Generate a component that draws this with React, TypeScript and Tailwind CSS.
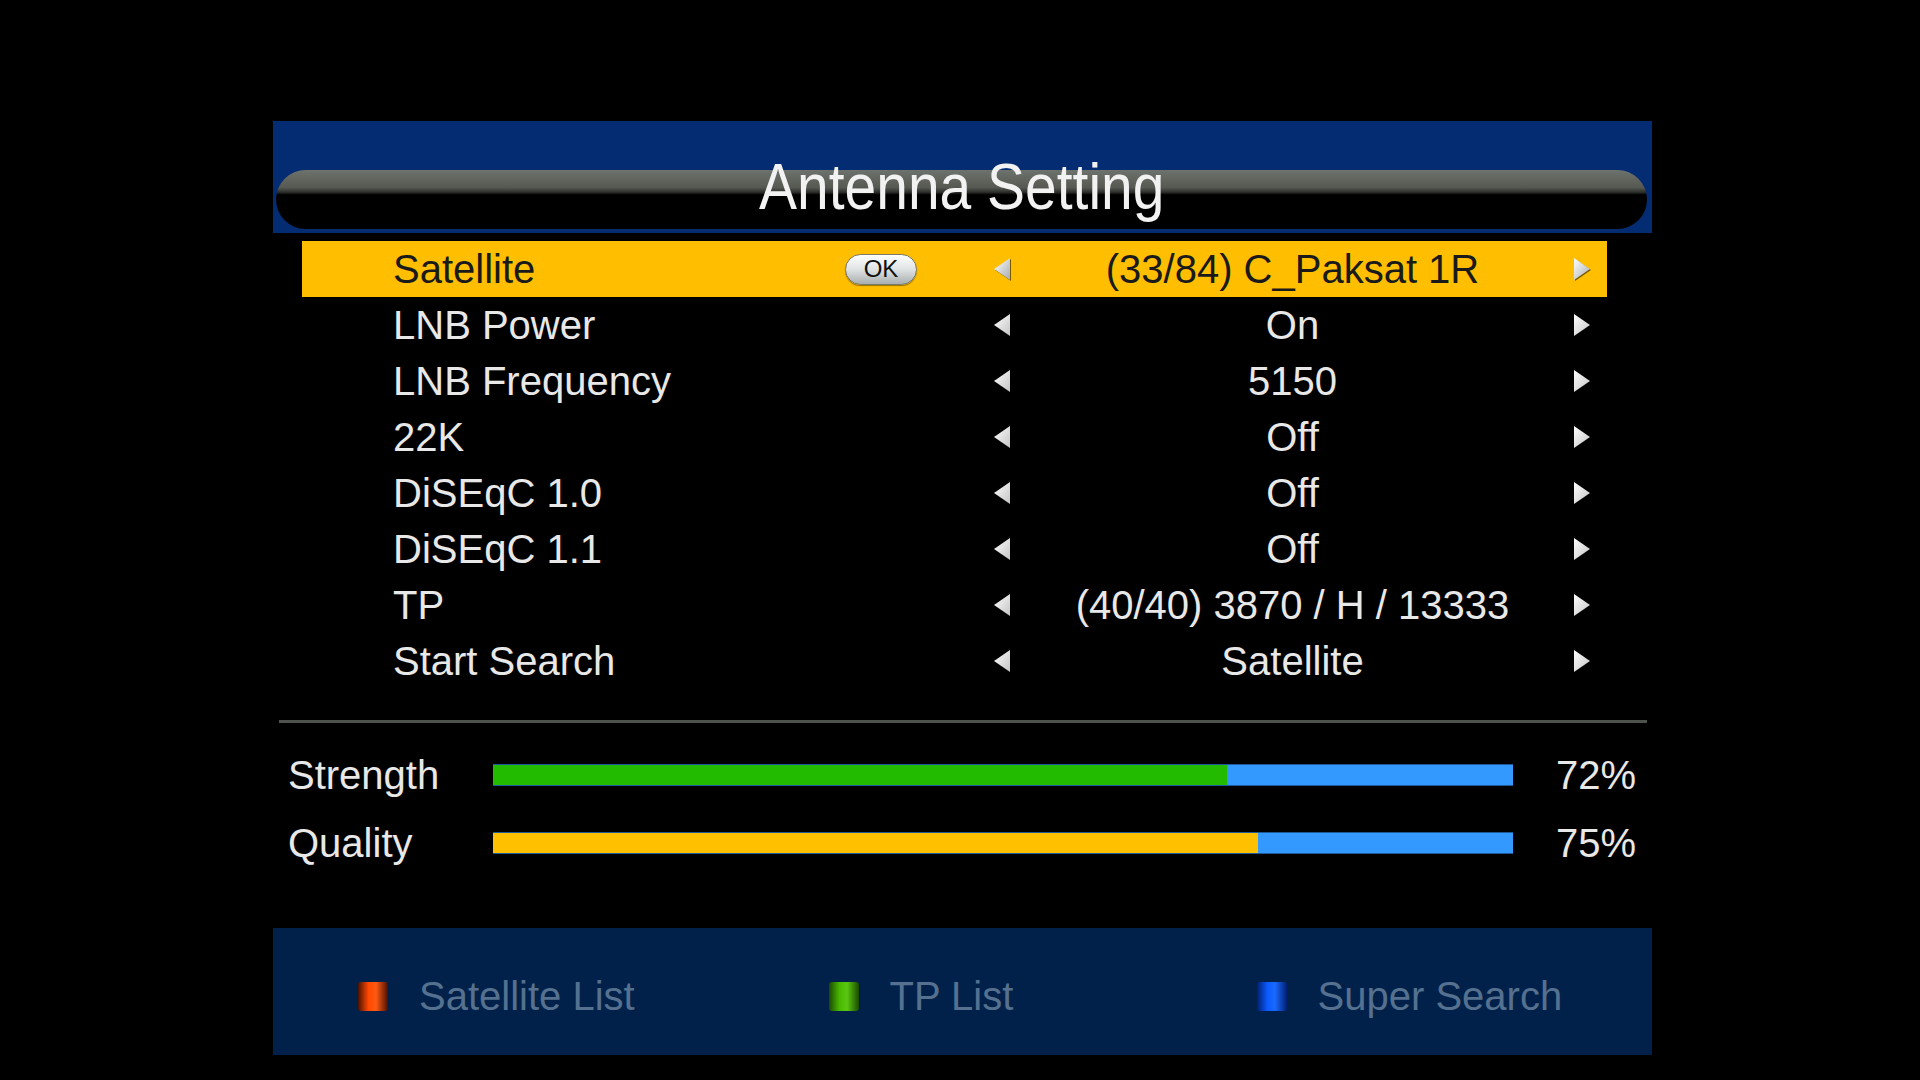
import React from 'react';

type Row = { label: string; value: string };

const rows: Row[] = [
  { label: 'Satellite', value: '(33/84) C_Paksat 1R' },
  { label: 'LNB Power', value: 'On' },
  { label: 'LNB Frequency', value: '5150' },
  { label: '22K', value: 'Off' },
  { label: 'DiSEqC 1.0', value: 'Off' },
  { label: 'DiSEqC 1.1', value: 'Off' },
  { label: 'TP', value: '(40/40) 3870 / H / 13333' },
  { label: 'Start Search', value: 'Satellite' },
];

function Arrow({ dir, active }: { dir: 'left' | 'right'; active?: boolean }) {
  const pts = dir === 'left' ? '17,1 17,23 1,12' : '1,1 1,23 17,12';
  const shadow = dir === 'left' ? '18,2 18,24 2,13' : '2,2 2,24 18,13';
  const id = `${dir}-${active ? 'on' : 'off'}`;
  return (
    <svg width="19" height="25" viewBox="0 0 19 25" className="shrink-0">
      <defs>
        <linearGradient id={id} x1="0" y1="0" x2="1" y2="1">
          <stop offset="0%" stopColor="#ffffff" />
          <stop offset="100%" stopColor={active ? '#a8adb0' : '#c4c4c4'} />
        </linearGradient>
      </defs>
      {active && <polygon points={shadow} fill="#4a3800" opacity="0.75" />}
      <polygon points={pts} fill={`url(#${id})`} />
    </svg>
  );
}

function MenuRow({ row, selected }: { row: Row; selected: boolean }) {
  return (
    <div
      className={`flex items-center h-[56px] text-[40px] leading-none ${
        selected ? 'bg-[#ffbe00] text-[#1a1a1a]' : 'text-[#e8e8e8]'
      }`}
    >
      <div className="flex items-center w-[691px] pl-[91px]">
        <span className="w-[452px] whitespace-nowrap">{row.label}</span>
        {selected && (
          <span className="flex items-center justify-center w-[72px] h-[31px] rounded-full border border-[#7a7a6a] bg-gradient-to-b from-[#ffffff] via-[#dfe3e3] to-[#a9aeae] text-[24px] text-[#111] shadow-[0_1px_1px_rgba(0,0,0,0.4)]">
            OK
          </span>
        )}
      </div>
      <Arrow dir="left" active={selected} />
      <span className="w-[561px] text-center whitespace-nowrap">{row.value}</span>
      <Arrow dir="right" active={selected} />
    </div>
  );
}

function SignalBar({ label, value, fill }: { label: string; value: number; fill: string }) {
  return (
    <div className="flex items-center h-[56px] pl-[15px] text-[40px] text-[#e8e8e8]">
      <span className="w-[205px]">{label}</span>
      <div className="flex w-[1020px] h-[22px] bg-[#3399ff] border-y border-[#1e5a99]">
        <div className={`h-full ${fill}`} style={{ width: `${value}%` }} />
      </div>
      <span className="w-[123px] text-right">{value}%</span>
    </div>
  );
}

function ColorKey({ swatch, label, width }: { swatch: string; label: string; width: string }) {
  return (
    <div className={`flex items-center ${width}`}>
      <span className={`w-[30px] h-[29px] rounded-[3px] ${swatch}`} />
      <span className="ml-[31px] text-[40px] text-[#55718f]">{label}</span>
    </div>
  );
}

export default function App() {
  return (
    <div className="w-[1920px] h-[1080px] bg-black overflow-hidden font-['Liberation_Sans',Arial,sans-serif]">
      <div className="ml-[273px] w-[1379px] pt-[121px]">
        {/* Title banner */}
        <div className="h-[112px] bg-[#042c72] pt-[49px]">
          <div className="ml-[3px] mr-[5px] h-[59px] rounded-full bg-[linear-gradient(to_bottom,#6e726c_0%,#555952_30%,#2a2c29_38%,#000_42%,#000_100%)] flex justify-center">
            <span className="inline-block -mt-[15px] h-[64px] text-[64px] leading-none text-[#f2f2f2] scale-x-[0.89] whitespace-nowrap">
              Antenna Setting
            </span>
          </div>
        </div>

        {/* Settings list */}
        <div className="mt-[8px] pl-[29px] pr-[45px]">
          {rows.map((row, i) => (
            <MenuRow key={row.label} row={row} selected={i === 0} />
          ))}
        </div>

        <div className="mt-[31px] ml-[6px] mr-[5px] h-[3px] bg-[#4d524d]" />

        {/* Signal meters */}
        <div className="mt-[24px]">
          <SignalBar label="Strength" value={72} fill="bg-[#22bb00]" />
          <div className="mt-[12px]">
            <SignalBar label="Quality" value={75} fill="bg-[#ffc000]" />
          </div>
        </div>

        {/* Colour key help bar */}
        <div className="mt-[57px] h-[127px] bg-[#01214a] flex items-center pl-[85px] pt-[9px]">
          <ColorKey
            width="w-[476px]"
            label="Satellite List"
            swatch="bg-[linear-gradient(to_right,#4a1000,#ff4800_35%,#ff5a14_60%,#4a1000)]"
          />
          <ColorKey
            width="w-[433px]"
            label="TP List"
            swatch="bg-[linear-gradient(to_right,#1a4a00,#48b800_35%,#5ac810_60%,#1a4a00)]"
          />
          <ColorKey
            width="w-[400px]"
            label="Super Search"
            swatch="bg-[linear-gradient(to_right,#001f70,#0a5aff_35%,#1a6aff_60%,#001f70)]"
          />
        </div>
      </div>
    </div>
  );
}
